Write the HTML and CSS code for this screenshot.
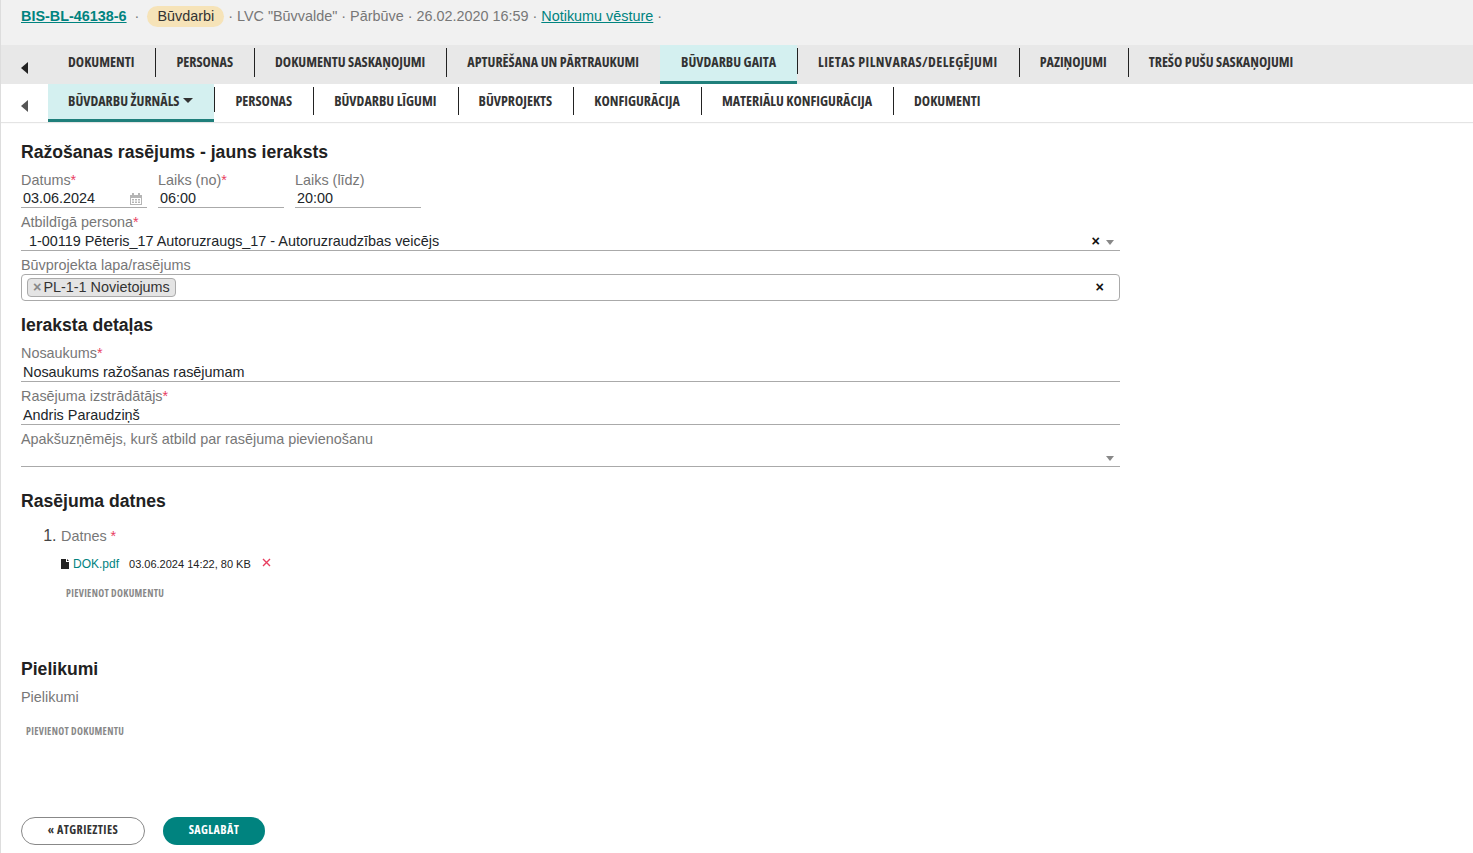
FILE: index.html
```html
<!DOCTYPE html>
<html lang="lv">
<head>
<meta charset="UTF-8" />
<meta name="viewport" content="width=device-width, initial-scale=1" />
<title>Ražošanas rasējums</title>
<link rel="stylesheet" href="styles.css">
</head>
<body>

<div class="topbar">
  <a class="case-link" href="#">BIS-BL-46138-6</a>
  <span class="dot first">·</span>
  <span class="badge">Būvdarbi</span>
  <span class="meta">· LVC "Būvvalde" · Pārbūve · 26.02.2020 16:59 · <a href="#">Notikumu vēsture</a> ·</span>
</div>

<nav class="tabs main">
  <span class="arrow"><svg width="8" height="12" viewBox="0 0 8 12"><path d="M7 0v12L0 6z"/></svg></span>
  <a href="#">DOKUMENTI</a>
  <a href="#">PERSONAS</a>
  <a href="#">DOKUMENTU SASKAŅOJUMI</a>
  <a href="#">APTURĒŠANA UN PĀRTRAUKUMI</a>
  <a href="#" class="active">BŪVDARBU GAITA</a>
  <a href="#" class="loose">LIETAS PILNVARAS/DELEĢĒJUMI</a>
  <a href="#">PAZIŅOJUMI</a>
  <a href="#">TREŠO PUŠU SASKAŅOJUMI</a>
</nav>

<nav class="tabs sub">
  <span class="arrow"><svg width="8" height="12" viewBox="0 0 8 12"><path d="M7 0v12L0 6z"/></svg></span>
  <a href="#" class="active">BŪVDARBU ŽURNĀLS <i class="caret"></i></a>
  <a href="#">PERSONAS</a>
  <a href="#">BŪVDARBU LĪGUMI</a>
  <a href="#">BŪVPROJEKTS</a>
  <a href="#">KONFIGURĀCIJA</a>
  <a href="#">MATERIĀLU KONFIGURĀCIJA</a>
  <a href="#">DOKUMENTI</a>
</nav>

<main class="content">
  <h2 class="title">Ražošanas rasējums - jauns ieraksts</h2>

  <div class="time-row">
    <div class="field">
      <label>Datums<em>*</em></label>
      <div class="input">03.06.2024
        <svg class="cal" width="12" height="12" viewBox="0 0 12 12"><path fill="#b5b5b5" d="M0 2h2V0h2v2h4V0h2v2h2v10H0zM1 5v6h10V5z"/><path fill="#b5b5b5" d="M2 6h2v1.5H2zM5 6h2v1.5H5zM8 6h2v1.5H8zM2 8.5h2V10H2zM5 8.5h2V10H5zM8 8.5h2V10H8z"/></svg>
      </div>
    </div>
    <div class="field">
      <label>Laiks (no)<em>*</em></label>
      <div class="input">06:00</div>
    </div>
    <div class="field">
      <label>Laiks (līdz)</label>
      <div class="input">20:00</div>
    </div>
  </div>

  <div class="field">
    <label>Atbildīgā persona<em>*</em></label>
    <div class="input select">1-00119 Pēteris_17 Autoruzraugs_17 - Autoruzraudzības veicējs
      <span class="clear">×</span><i class="drop"></i>
    </div>
  </div>

  <div class="field">
    <label>Būvprojekta lapa/rasējums</label>
    <div class="multi">
      <span class="chip"><b>×</b>PL-1-1 Novietojums</span>
      <span class="clear">×</span>
    </div>
  </div>

  <h2 class="section details">Ieraksta detaļas</h2>

  <div class="field wide">
    <label>Nosaukums<em>*</em></label>
    <div class="input">Nosaukums ražošanas rasējumam</div>
  </div>
  <div class="field wide">
    <label>Rasējuma izstrādātājs<em>*</em></label>
    <div class="input">Andris Paraudziņš</div>
  </div>
  <div class="field wide">
    <label>Apakšuzņēmējs, kurš atbild par rasējuma pievienošanu</label>
    <div class="input select short"><i class="drop"></i></div>
  </div>

  <h2 class="section files">Rasējuma datnes</h2>

  <ol class="file-list">
    <li>
      <span class="file-label">Datnes <em>*</em></span>
      <div class="file-row">
        <svg width="8" height="10" viewBox="0 0 8 10"><path fill="#222" d="M0 0h5v3h3v7H0zM6 0l2 2H6z"/></svg>
        <a href="#">DOK.pdf</a>
        <span class="file-info">03.06.2024 14:22, 80 KB</span>
        <svg class="remove" width="9" height="9" viewBox="0 0 9 9"><path stroke="#e83e5f" stroke-width="1.4" d="M1 1l7 7M8 1L1 8"/></svg>
      </div>
      <a class="add-doc" href="#">PIEVIENOT DOKUMENTU</a>
    </li>
  </ol>

  <h2 class="section attach">Pielikumi</h2>
  <div class="attach-label">Pielikumi</div>
  <a class="add-doc second" href="#">PIEVIENOT DOKUMENTU</a>

  <div class="actions">
    <a class="btn back" href="#">« ATGRIEZTIES</a>
    <a class="btn save" href="#">SAGLABĀT</a>
  </div>
</main>

</body>
</html>
```

FILE: styles.css
```css
/* Base */
* {
  box-sizing: border-box;
}
html, body {
  height: 100%;
}
body {
  margin: 0;
  font-family: 'Liberation Sans', Arial, sans-serif;
  font-size: 14.4px;
  color: #212529;
  background: #fff;
  border-left: 1px solid #ddd;
  overflow: hidden;
}
a {
  color: #00837f;
}
em {
  color: #e83e5f;
  font-style: normal;
}

/* Top bar */
.topbar {
  height: 45px;
  background: #f1f1f1;
  padding: 5px 0 0 20px;
  display: flex;
  align-items: flex-start;
  color: #777;
  line-height: 22px;
}
.case-link {
  font-weight: 700;
}
.dot.first {
  margin: 0 8px 0 8px;
}
.badge {
  background: #f6e3b8;
  color: #333;
  border-radius: 11px;
  height: 21px;
  line-height: 21px;
  padding: 0 10px;
  margin: 1px 3px 0 0;
}
.meta {
  margin-left: 1px;
}

/* Tabs */
.tabs {
  display: flex;
  align-items: stretch;
  font-family: 'Open Sans', sans-serif;
  font-stretch: 75%;
  font-weight: 700;
  font-size: 14px;
}
.tabs .arrow {
  width: 46px;
  display: flex;
  align-items: center;
  padding: 6px 0 0 20px;
}
.tabs a {
  position: relative;
  display: flex;
  align-items: center;
  padding: 0 21px 6px;
  color: #333;
  text-decoration: none;
  white-space: nowrap;
}
.tabs a.loose {
  letter-spacing: 0.4px;
}
.tabs a::after {
  content: "";
  position: absolute;
  right: -1px;
  top: 3px;
  bottom: 7px;
  width: 1px;
  background: #222;
}
.tabs a:last-child::after {
  display: none;
}
.tabs a.active {
  background: #d4f0f0;
  border-bottom: 3px solid #1f7f7b;
  padding-bottom: 3px;
}
.tabs.main {
  height: 39px;
  background: #e8e8e8;
}
.tabs.sub {
  height: 38px;
  background: #fff;
  box-shadow: 0 1px 1px #e4e4e4;
}
.tabs.sub .arrow {
  width: 47px;
}
.tabs.sub a.active {
  padding: 0 21px 3px 20px;
}
.arrow svg {
  fill: #222;
}
.tabs.sub .arrow svg {
  fill: #555;
}
.caret {
  display: inline-block;
  margin-left: 4px;
  border-left: 5px solid transparent;
  border-right: 5px solid transparent;
  border-top: 5px solid #333;
}

/* Form */
.content {
  padding: 20px 0 0 20px;
  width: 1119px;
}
h2 {
  margin: 0;
  font-size: 17.6px;
  line-height: 21px;
  color: #212121;
}
.title {
  margin-bottom: 7px;
}
.time-row {
  display: flex;
  gap: 11px;
}
.time-row .field {
  width: 126px;
}
.field {
  margin-bottom: 4px;
}
label {
  display: block;
  color: #777;
  line-height: 20px;
}
.input {
  position: relative;
  height: 19px;
  line-height: 18px;
  padding-left: 2px;
  border-bottom: 1px solid #aaa;
  color: #212529;
}
.time-row .input {
  height: 18px;
  line-height: 16px;
}
.input.short {
  height: 18px;
}
.cal {
  position: absolute;
  right: 5px;
  top: 3px;
}
.select {
  padding-left: 8px;
}
.select .clear {
  position: absolute;
  right: 20px;
  top: 0;
}
.clear {
  font-weight: 700;
  color: #111;
}
.drop {
  position: absolute;
  right: 6px;
  top: 8px;
  border-left: 4px solid transparent;
  border-right: 4px solid transparent;
  border-top: 5px solid #888;
}
.short .drop {
  top: 7px;
}
.multi {
  position: relative;
  height: 27px;
  margin-top: -1px;
  border: 1px solid #aaa;
  border-radius: 4px;
  padding: 3px 5px;
}
.multi .clear {
  position: absolute;
  right: 15px;
  top: 4px;
}
.chip {
  display: inline-block;
  height: 19px;
  line-height: 17px;
  padding: 0 5px;
  background: #e4e4e4;
  border: 1px solid #aaa;
  border-radius: 4px;
  color: #333;
}
.chip b {
  color: #888;
  margin-right: 2px;
}
.section.details {
  margin: 14px 0 7px;
}
.section.files {
  margin: 24px 0 0;
}
.section.attach {
  margin: 59px 0 0;
}

/* Files */
.file-list {
  margin: 14px 0 0;
  padding: 0 0 0 40px;
  color: #444;
  font-size: 16px;
}
.file-label {
  font-size: 14.4px;
  color: #777;
  line-height: 20px;
}
.file-row {
  display: flex;
  align-items: center;
  margin-top: 9px;
  height: 18px;
  font-size: 12px;
}
.file-row a {
  text-decoration: none;
  margin-left: 4px;
}
.file-info {
  font-size: 11px;
  color: #222;
  margin-left: 10px;
}
.remove {
  margin: -4px 0 0 11px;
}
.add-doc {
  display: block;
  font-family: 'Open Sans', sans-serif;
  font-stretch: 75%;
  font-weight: 700;
  font-size: 10px;
  line-height: 13px;
  letter-spacing: 0.3px;
  color: #888;
  text-decoration: none;
  margin: 14px 0 0 5px;
}
.attach-label {
  color: #777;
  margin-top: 7px;
  line-height: 20px;
}
.add-doc.second {
  margin-top: 18px;
}

/* Buttons */
.actions {
  display: flex;
  gap: 18px;
  margin-top: 79px;
}
.btn {
  height: 28px;
  border-radius: 14px;
  display: flex;
  align-items: center;
  justify-content: center;
  padding-bottom: 3px;
  font-family: 'Open Sans', sans-serif;
  font-stretch: 75%;
  font-weight: 700;
  font-size: 12px;
  letter-spacing: 0.4px;
  text-decoration: none;
}
.btn.back {
  width: 124px;
  border: 1px solid #888;
  color: #333;
}
.btn.save {
  width: 102px;
  background: #00837f;
  color: #fff;
}
```
